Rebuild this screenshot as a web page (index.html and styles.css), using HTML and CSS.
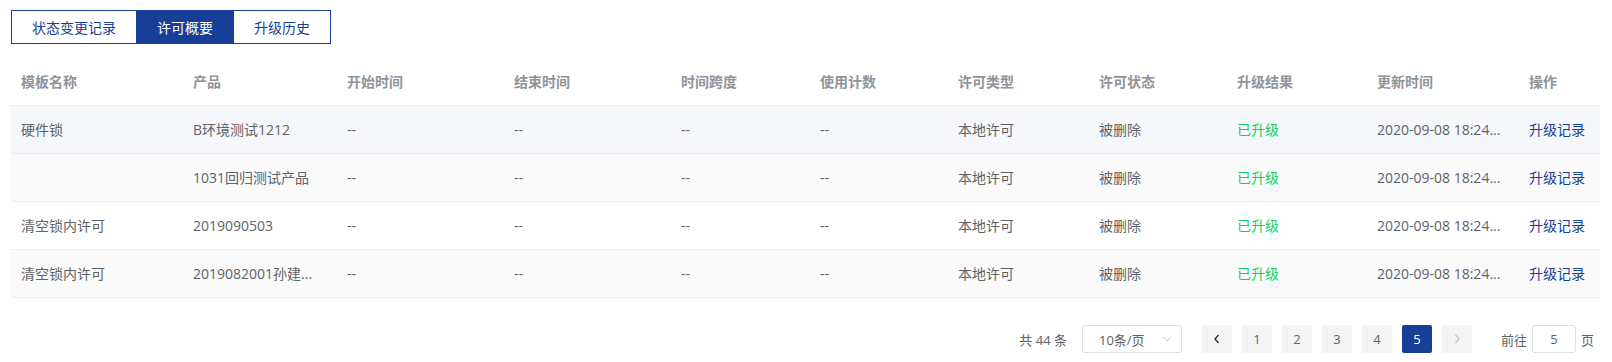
FILE: index.html
```html
<!DOCTYPE html>
<html lang="zh-CN">
<head>
  <meta charset="UTF-8">
  <meta name="viewport" content="width=device-width, initial-scale=1.0">
  <title>许可概要</title>
  <link rel="stylesheet" href="styles.css">
</head>
<body>
  <div class="tabs">
    <button class="tab">状态变更记录</button>
    <button class="tab active">许可概要</button>
    <button class="tab">升级历史</button>
  </div>

  <table class="grid">
    <colgroup>
      <col style="width:172px"><col style="width:154px"><col style="width:167px"><col style="width:167px">
      <col style="width:139px"><col style="width:138px"><col style="width:141px"><col style="width:138px">
      <col style="width:140px"><col style="width:152px"><col style="width:81px">
    </colgroup>
    <thead>
      <tr>
        <th><div class="cell">模板名称</div></th>
        <th><div class="cell">产品</div></th>
        <th><div class="cell">开始时间</div></th>
        <th><div class="cell">结束时间</div></th>
        <th><div class="cell">时间跨度</div></th>
        <th><div class="cell">使用计数</div></th>
        <th><div class="cell">许可类型</div></th>
        <th><div class="cell">许可状态</div></th>
        <th><div class="cell">升级结果</div></th>
        <th><div class="cell">更新时间</div></th>
        <th><div class="cell">操作</div></th>
      </tr>
    </thead>
    <tbody>
      <tr class="hover">
        <td><div class="cell">硬件锁</div></td>
        <td><div class="cell">B环境测试1212</div></td>
        <td><div class="cell">--</div></td>
        <td><div class="cell">--</div></td>
        <td><div class="cell">--</div></td>
        <td><div class="cell">--</div></td>
        <td><div class="cell">本地许可</div></td>
        <td><div class="cell">被删除</div></td>
        <td><div class="cell ok">已升级</div></td>
        <td><div class="cell">2020-09-08 18:24...</div></td>
        <td><div class="cell"><a class="link" href="#">升级记录</a></div></td>
      </tr>
      <tr class="stripe">
        <td><div class="cell"></div></td>
        <td><div class="cell">1031回归测试产品</div></td>
        <td><div class="cell">--</div></td>
        <td><div class="cell">--</div></td>
        <td><div class="cell">--</div></td>
        <td><div class="cell">--</div></td>
        <td><div class="cell">本地许可</div></td>
        <td><div class="cell">被删除</div></td>
        <td><div class="cell ok">已升级</div></td>
        <td><div class="cell">2020-09-08 18:24...</div></td>
        <td><div class="cell"><a class="link" href="#">升级记录</a></div></td>
      </tr>
      <tr>
        <td><div class="cell">清空锁内许可</div></td>
        <td><div class="cell">2019090503</div></td>
        <td><div class="cell">--</div></td>
        <td><div class="cell">--</div></td>
        <td><div class="cell">--</div></td>
        <td><div class="cell">--</div></td>
        <td><div class="cell">本地许可</div></td>
        <td><div class="cell">被删除</div></td>
        <td><div class="cell ok">已升级</div></td>
        <td><div class="cell">2020-09-08 18:24...</div></td>
        <td><div class="cell"><a class="link" href="#">升级记录</a></div></td>
      </tr>
      <tr class="stripe">
        <td><div class="cell">清空锁内许可</div></td>
        <td><div class="cell">2019082001孙建...</div></td>
        <td><div class="cell">--</div></td>
        <td><div class="cell">--</div></td>
        <td><div class="cell">--</div></td>
        <td><div class="cell">--</div></td>
        <td><div class="cell">本地许可</div></td>
        <td><div class="cell">被删除</div></td>
        <td><div class="cell ok">已升级</div></td>
        <td><div class="cell">2020-09-08 18:24...</div></td>
        <td><div class="cell"><a class="link" href="#">升级记录</a></div></td>
      </tr>
    </tbody>
  </table>

  <div class="pager">
    <span class="total">共 44 条</span>
    <div class="size">
      <span>10条/页</span>
      <svg width="12" height="12" viewBox="0 0 12 12"><path d="M2 4l4 4 4-4" fill="none" stroke="#c0c4cc" stroke-width="1"/></svg>
    </div>
    <button class="pbtn">
      <svg width="10" height="12" viewBox="0 0 10 12"><path d="M6.5 2L3 6l3.5 4" fill="none" stroke="#303133" stroke-width="1.4"/></svg>
    </button>
    <button class="pbtn">1</button>
    <button class="pbtn">2</button>
    <button class="pbtn">3</button>
    <button class="pbtn">4</button>
    <button class="pbtn current">5</button>
    <button class="pbtn">
      <svg width="10" height="12" viewBox="0 0 10 12"><path d="M3.5 2L7 6l-3.5 4" fill="none" stroke="#c0c4cc" stroke-width="1.4"/></svg>
    </button>
    <span class="jump">前往<span class="jump-input">5</span>页</span>
  </div>
</body>
</html>
```

FILE: styles.css
```css
* {
  box-sizing: border-box;
}
body {
  margin: 0;
  padding: 10px 12px 0 11px;
  font-family: "Open Sans", "Noto Sans CJK SC", sans-serif;
  font-size: 14px;
  color: #606266;
  background: #fff;
}
.tabs {
  display: inline-flex;
  border: 1px solid #173f98;
}
.tab {
  height: 32px;
  padding: 0 20px;
  border: none;
  border-left: 1px solid #173f98;
  background: #fff;
  color: #173f98;
  font: inherit;
  font-size: 14px;
  cursor: pointer;
}
.tab:first-child {
  border-left: none;
}
.tab.active {
  background: #173f98;
  color: #fff;
}
.grid {
  margin-top: 14px;
  width: 1589px;
  border-collapse: collapse;
  table-layout: fixed;
}
.grid th,
.grid td {
  padding: 12px 0;
  border-bottom: 1px solid #ebeef5;
  text-align: left;
}
.grid th {
  color: #909399;
  font-weight: bold;
}
.cell {
  padding: 0 10px;
  line-height: 23px;
  white-space: nowrap;
  overflow: hidden;
}
.grid tr.hover td {
  background: #f5f7fa;
}
.grid tr.stripe td {
  background: #fafafa;
}
.ok {
  color: #13ce66;
}
.link {
  color: #173f98;
  text-decoration: none;
}
.pager {
  display: flex;
  justify-content: flex-end;
  align-items: center;
  margin-top: 27px;
  padding-right: 6px;
  font-size: 13px;
  color: #606266;
}
.total {
  margin-right: 15px;
}
.size {
  width: 100px;
  height: 28px;
  border: 1px solid #dcdfe6;
  border-radius: 3px;
  display: flex;
  align-items: center;
  justify-content: space-between;
  padding: 0 8px 0 16px;
  margin-right: 15px;
}
.pbtn {
  min-width: 30px;
  height: 28px;
  margin: 0 5px;
  border: none;
  border-radius: 2px;
  background: #f4f4f5;
  color: #606266;
  font: inherit;
  font-size: 13px;
  display: flex;
  align-items: center;
  justify-content: center;
  padding: 0;
}
.pbtn.current {
  background: #173f98;
  color: #fff;
}
.jump {
  margin-left: 24px;
  display: flex;
  align-items: center;
}
.jump-input {
  width: 44px;
  height: 28px;
  margin: 0 5px;
  border: 1px solid #dcdfe6;
  border-radius: 3px;
  display: flex;
  align-items: center;
  justify-content: center;
}
```
